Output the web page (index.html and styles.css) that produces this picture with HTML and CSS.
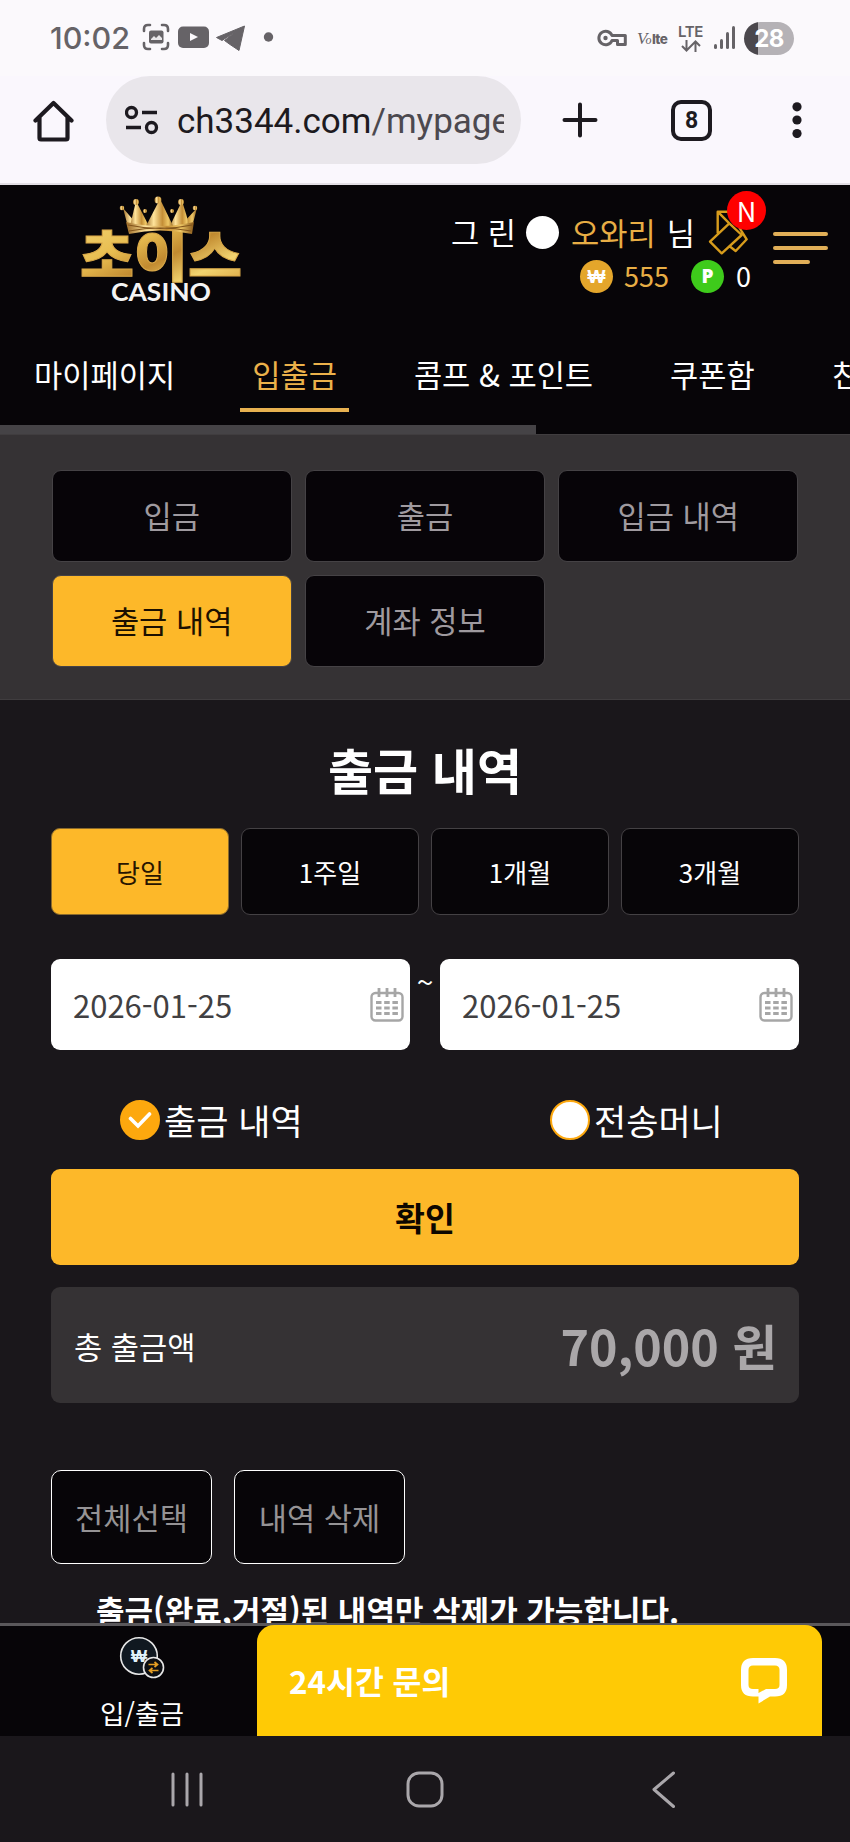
FILE: index.html
```html
<!DOCTYPE html>
<html lang="ko">
<head>
<meta charset="utf-8">
<title>출금 내역</title>
<link rel="stylesheet" href="styles.css">
</head>
<body>
<div class="phone">
  <div class="status">
    <span class="clock">10:02</span>
    <svg class="status-left" width="134" height="30" viewBox="0 0 134 30">
      <g fill="none" stroke="#666367" stroke-width="2.6" stroke-linecap="round">
        <path d="M2 8V6q0-4 4-4h2M20 2h2q4 0 4 4v2M26 20v2q0 4-4 4h-2M8 26H6q-4 0-4-4v-2"/>
      </g>
      <rect x="7" y="7.500" width="14.500" height="13" rx="2" fill="#666367"/>
      <path d="M9 16l3-3 2 2 3-3 3 3v2H9z" fill="#e8e6e9"/>
      <rect x="36" y="3.500" width="31" height="21.500" rx="5" fill="#666367"/>
      <path d="M48 10v8l8-4z" fill="#fbf9fc"/>
      <path d="M74.500 14.500L102.500 3 97 27.500 88 21.500 82.500 17.500 94 8.500 80 17.500z" fill="#666367" stroke="#666367" stroke-width="1" stroke-linejoin="round"/>
      <circle cx="126.500" cy="14" r="4.700" fill="#666367"/>
    </svg>
    <span class="status-space"></span>
    <svg class="key" width="30" height="18" viewBox="0 0 30 18" fill="none" stroke="#666367" stroke-width="3" stroke-linejoin="round"><path d="M15 6.500H28.300V15.500H20.500V11.500H15A6.800 6.800 0 1 1 15 6.500z"/><circle cx="8.500" cy="9" r="2.200" fill="#666367" stroke="none"/></svg>
    <span class="volte"><i>V<small>o</small></i><b>lte</b></span>
    <span class="lte">LTE<svg width="20" height="12" viewBox="0 0 20 12" fill="none" stroke="#666367" stroke-width="2"><path d="M5.500 0v10M1 6l4.500 4.500L10 6M14.500 12V2M10 6l4.500-4.500L19 6"/></svg></span>
    <svg class="signal" width="22" height="24" viewBox="0 0 22 24" fill="#666367"><rect y="18" width="3" height="5" rx="1.500"/><rect x="6" y="13" width="3" height="10" rx="1.500"/><rect x="12" y="6" width="3" height="17" rx="1.500"/><rect x="18" width="3" height="23" rx="1.500"/></svg>
    <span class="battery">28</span>
  </div>

  <div class="toolbar">
    <svg class="home" width="42" height="42" viewBox="0 0 42 42" fill="none" stroke="#1d1a20" stroke-width="4.200" stroke-linecap="round" stroke-linejoin="round"><path d="M2.500 20.500L20.500 3 38.500 20.500M6.500 17V38q0 1.500 1.500 1.500H33q1.500 0 1.500-1.500V17"/></svg>
    <div class="omnibox">
      <svg width="34" height="30" viewBox="0 0 34 30" fill="none" stroke="#1d1a20" stroke-width="3.300"><circle cx="6.500" cy="7.500" r="5"/><path d="M17 7.500H32M1 22.500H16"/><circle cx="26.500" cy="22.500" r="5"/></svg>
      <span class="url">ch3344.com<span class="path">/mypage</span></span>
    </div>
    <svg class="plus" width="36" height="36" viewBox="0 0 36 36" stroke="#1d1a20" stroke-width="4" stroke-linecap="round"><path d="M18 2.500V33.500M2.500 18H33.500"/></svg>
    <span class="tabs-count">8</span>
    <svg class="more" width="10" height="36" viewBox="0 0 10 36" fill="#1d1a20"><circle cx="5" cy="4.800" r="4.600"/><circle cx="5" cy="18" r="4.600"/><circle cx="5" cy="31.500" r="4.600"/></svg>
  </div>

  <header class="header">
    <svg class="logo" width="170" height="112" viewBox="0 0 170 112">
      <defs>
        <linearGradient id="gold" x1="0" y1="0" x2="1" y2="1"><stop offset="0" stop-color="#f2d778"/><stop offset=".35" stop-color="#e8bd50"/><stop offset=".55" stop-color="#c18a30"/><stop offset=".75" stop-color="#f2d470"/><stop offset="1" stop-color="#d39a38"/></linearGradient>
        <linearGradient id="crown" x1="0" y1="0" x2="1" y2="0"><stop offset="0" stop-color="#9c6a25"/><stop offset=".3" stop-color="#ffe49b"/><stop offset=".6" stop-color="#c48e36"/><stop offset=".8" stop-color="#efc866"/><stop offset="1" stop-color="#875719"/></linearGradient>
      </defs>
      <text class="logo-ko" x="4" y="80" textLength="162" lengthAdjust="spacingAndGlyphs">초이스</text>
      <g fill="url(#crown)">
        <path d="M52 31L47 12 59 26 60 15 71 30z"/>
        <path d="M116 31L121 12 108 26 107 15 97 30z"/>
        <path d="M53 34L60 5 74 32z"/><path d="M115 34L106 5 93 32z"/>
        <path d="M69 32L84 3 98 32z"/>
        <path d="M50 26q34 8 68 0l-2 12q-32-7-63 0z"/>
        <circle cx="46" cy="12" r="2.300"/><circle cx="60" cy="6" r="3"/><circle cx="82" cy="4" r="3.500"/><circle cx="105" cy="6" r="3"/><circle cx="119" cy="12" r="2.300"/><circle cx="69" cy="15" r="2"/><circle cx="96" cy="15" r="2"/>
      </g>
      <path d="M52 29q32 7 64 0M53 35q31-6 62 0" fill="none" stroke="#82551c" stroke-width="1.200"/>
      <text class="logo-en" x="35" y="104.500" textLength="100" lengthAdjust="spacingAndGlyphs">CASINO</text>
    </svg>
    <div class="account">
      <div class="user">
        <span>그 린</span><i class="ball"></i><span class="name">오와리</span><span>님</span>
        <span class="note">
          <svg width="42" height="46" viewBox="0 0 42 46" fill="none" stroke="#d79c1c" stroke-width="2.400" stroke-linejoin="round"><path d="M2 32.700L21.300 14.300 33.700 26 13.700 44.300zM9.700 24.300V2.700H22M9.700 2.700L21.300 14.300M22 2.700L34 23 38.700 30.300 27.700 42 21.300 37"/></svg>
          <b class="badge">N</b>
        </span>
      </div>
      <div class="wallet">
        <i class="coin won">₩</i><span class="won-value">555</span><i class="coin point">P</i><span>0</span>
      </div>
    </div>
    <div class="menu"><i></i><i></i><i class="short"></i></div>
  </header>

  <nav class="tabs">
    <span>마이페이지</span><span class="active">입출금</span><span>콤프 &amp; 포인트</span><span>쿠폰함</span><span>친구</span>
  </nav>
  <div class="scroll-track"><div class="scroll-thumb"></div></div>

  <section class="submenu">
    <span>입금</span><span>출금</span><span>입금 내역</span><span class="active">출금 내역</span><span>계좌 정보</span>
  </section>

  <main class="content">
    <h1>출금 내역</h1>
    <div class="periods"><span class="active">당일</span><span>1주일</span><span>1개월</span><span>3개월</span></div>
    <div class="dates">
      <div class="date">2026-01-25<svg width="34" height="34" viewBox="0 0 34 34" fill="none" stroke="#a6a6a6" stroke-width="2.400"><rect x="1.500" y="5" width="31" height="27.500" rx="4"/><g stroke-width="2.800"><path d="M9 0V9M17 0V9M25 0V9"/><path d="M6 14.500H28M6 20H28M6 25.500H28" stroke-dasharray="5.500 2.700"/></g></svg></div>
      <span class="tilde">~</span>
      <div class="date">2026-01-25<svg width="34" height="34" viewBox="0 0 34 34" fill="none" stroke="#a6a6a6" stroke-width="2.400"><rect x="1.500" y="5" width="31" height="27.500" rx="4"/><g stroke-width="2.800"><path d="M9 0V9M17 0V9M25 0V9"/><path d="M6 14.500H28M6 20H28M6 25.500H28" stroke-dasharray="5.500 2.700"/></g></svg></div>
    </div>
    <div class="radios">
      <label class="radio"><i class="dot checked"><svg width="24" height="18" viewBox="0 0 24 18" fill="none" stroke="#fff" stroke-width="3.600" stroke-linecap="round"><path d="M2.500 7.500L10 15 21.500 3"/></svg></i>출금 내역</label>
      <label class="radio"><i class="dot"></i>전송머니</label>
    </div>
    <div class="confirm">확인</div>
    <div class="total"><span>총 출금액</span><strong>70,000 원</strong></div>
    <div class="actions"><span>전체선택</span><span class="wide">내역 삭제</span></div>
    <p class="notice">출금(완료,거절)된 내역만 삭제가 가능합니다.</p>
  </main>

  <footer class="dock">
    <div class="dock-item">
      <svg width="46" height="44" viewBox="0 0 46 44"><circle cx="20" cy="20" r="18.300" fill="#101820" stroke="#e6e6e6" stroke-width="1.600"/><text class="won-glyph" x="20" y="26" text-anchor="middle">₩</text><circle cx="34.500" cy="31.500" r="10" fill="#0c0e12" stroke="#e6e6e6" stroke-width="1.600"/><path d="M29.500 28.500H38M35.500 26l3 2.500-3 2.500M39.500 34.500H31M33.500 32l-3 2.500 3 2.500" fill="none" stroke="#e39d22" stroke-width="1.700"/></svg>
      <span>입/출금</span>
    </div>
    <div class="chat"><span>24시간 문의</span>
      <svg width="48" height="48" viewBox="0 0 48 48"><path fill="#fff" fill-rule="evenodd" d="M13 1H35Q47 1 47 13V28Q47 39.500 35 39.500H30L18.500 46.500V39.500H13Q1 39.500 1 28V13Q1 1 13 1zM13 8.500Q8.500 8.500 8.500 13V28Q8.500 32 13 32H18.500V36L26 32H35Q39.500 32 39.500 28V13Q39.500 8.500 35 8.500z"/></svg>
    </div>
  </footer>
  <div class="android">
    <svg width="34" height="36" viewBox="0 0 34 36" stroke="#aaa7ab" stroke-width="3" stroke-linecap="round"><path d="M3 2V33M17 2V33M31 2V33"/></svg>
    <svg width="38" height="38" viewBox="0 0 38 38" fill="none" stroke="#aaa7ab" stroke-width="3"><rect x="2" y="2" width="34" height="33" rx="11"/></svg>
    <svg width="24" height="38" viewBox="0 0 24 38" fill="none" stroke="#aaa7ab" stroke-width="3" stroke-linecap="round" stroke-linejoin="round"><path d="M21.500 2L2 18.500 21.500 35.500"/></svg>
  </div>
</div>
</body>
</html>
```

FILE: styles.css
```css
* { box-sizing: border-box; }
body { margin: 0; background: #1a171b; }
svg { display: block; flex: none; }
.phone {
  width: 850px; height: 1842px; overflow: hidden;
  display: flex; flex-direction: column;
  font-family: "Noto Sans CJK KR", "Noto Sans", sans-serif;
  font-size: 30.7px; color: #fff; white-space: nowrap;
}
.phone > * { flex: none; }
i { font-style: normal; }

.status { height: 76px; background: #fbf9fc; display: flex; align-items: center; padding: 0 56px 0 50px; color: #666367; font-family: Inter, sans-serif; }
.clock { font: 500 30.500px/30px Inter, sans-serif; width: 92px; }
.status-space { flex: 1; }
.key { margin-right: 10px; }
.volte { display: flex; align-items: baseline; width: 33px; margin-right: 7px; margin-top: 2px; }
.volte i { font: italic 17px/20px "Liberation Serif", serif; letter-spacing: -2px; width: 15px; }
.volte small { font-size: 12px; }
.volte b { font: 800 13.500px/20px Inter, sans-serif; letter-spacing: -0.7px; }
.lte { display: flex; flex-direction: column; align-items: center; width: 27px; font: 600 15px/14px Inter, sans-serif; margin-right: 10px; gap: 1px; letter-spacing: -0.3px; }
.signal { margin-right: 8px; }
.battery { width: 50px; height: 33px; border-radius: 17px; background: linear-gradient(90deg, #4b484d 14px, #b5b2b6 14px); color: #fff; font: 700 24px/33px Inter, sans-serif; text-align: center; letter-spacing: -0.5px; }

.toolbar { height: 109px; background: #faf7fd; border-bottom: 2px solid #e3dfe5; display: flex; padding: 0 48px 0 33px; }
.home { margin-top: 24px; margin-right: 31px; }
.omnibox { width: 416px; height: 88px; border-radius: 44px; background: #e9e6eb; display: flex; align-items: center; padding: 0 17px 0 19px; }
.url { margin: 4px 0 0 18px; width: 327px; overflow: hidden; font: 35px/50px Roboto, sans-serif; color: #1d1a20; }
.path { color: #4c494f; }
.plus { margin: 26px 0 0 41px; }
.tabs-count { width: 41px; height: 41px; margin: 24px 0 0 73px; border: 4px solid #1d1a20; border-radius: 10px; font: 700 23px/34px Roboto, sans-serif; color: #1d1a20; text-align: center; }
.more { margin: 26px 0 0 80px; }

.header { height: 145px; background: #070508; display: flex; padding-left: 76px; }
.logo { margin-top: 11px; }
.logo-ko { font: 900 55px "Noto Sans CJK KR", sans-serif; fill: url(#gold); stroke: #d9a848; stroke-width: 1; }
.logo-en { font: 700 25px Lato, sans-serif; fill: #f4f4f4; }
.account { width: 509px; margin-top: 22px; display: flex; flex-direction: column; align-items: flex-end; }
.user { display: flex; align-items: center; height: 50px; line-height: 50px; }
.ball { width: 33px; height: 33px; border-radius: 50%; background: #fff; margin: 0 12px 0 10px; }
.name { color: #e8ae45; margin-right: 11px; }
.note { position: relative; width: 42px; height: 46px; margin: 0 5px 0 13px; }
.badge { position: absolute; left: 19px; top: -18px; width: 39px; height: 39px; border-radius: 50%; background: #f00; font-weight: 400; font-size: 27px; line-height: 39px; text-align: center; }
.wallet { display: flex; align-items: center; height: 34px; margin-top: 2px; font-size: 27px; line-height: 34px; padding-right: 4px; }
.coin { width: 33px; height: 33px; border-radius: 50%; font: 800 19px/32px "Open Sans", sans-serif; text-align: center; }
.won { background: #e4a62b; }
.point { background: #3ecb1b; margin: 0 12px 0 22px; }
.won-value { color: #e8ae45; margin-left: 11px; }
.menu { margin: 47px 0 0 18px; display: flex; flex-direction: column; gap: 10px; }
.menu i { width: 55px; height: 4px; border-radius: 2px; background: #e1af58; }
.menu .short { width: 37px; }

.tabs { height: 95px; background: #070508; display: flex; padding: 20px 0 0 22px; line-height: 47px; }
.tabs span { flex: none; height: 62px; padding: 0 12px; margin-right: 53px; }
.tabs .active { color: #ebb14a; border-bottom: 4px solid #e7b150; }
.scroll-track { height: 9px; background: #070508; }
.scroll-thumb { height: 9px; width: 536px; background: #454346; }

.submenu { height: 266px; background: #353234; border-top: 1px solid #403d3f; border-bottom: 1px solid #403d3f; padding: 34.500px 51.500px; display: grid; grid-template-columns: repeat(3, 1fr); grid-auto-rows: 92px; gap: 13px; }
.submenu span { border: 1px solid #454245; border-radius: 9px; background: #070408; color: #9f9a9f; text-align: center; line-height: 87px; }
.submenu .active { background: #fdb829; color: #1c1000; }

.content { height: 923px; overflow: hidden; background: #1a171b; padding: 0 51px; }
h1 { margin: 0; padding-top: 37px; font-size: 49px; line-height: 64px; height: 128px; text-align: center; font-weight: 700; }
.periods { display: grid; grid-template-columns: repeat(4, 1fr); gap: 12px; }
.periods span { height: 87px; border: 1px solid #444144; border-radius: 9px; background: #070508; text-align: center; font-size: 26px; line-height: 85px; }
.periods .active { background: #fdb829; color: #281500; border-color: #8a6a2c; }
.dates { display: flex; margin-top: 44px; }
.date { width: 359px; height: 91px; border-radius: 9px; background: #fff; color: #414042; font-size: 31px; display: flex; align-items: center; justify-content: space-between; padding: 0 6px 0 22px; }
.tilde { width: 30px; text-align: center; font-size: 30px; line-height: 44px; }
.radios { display: flex; margin-top: 46px; height: 50px; }
.radio { flex: none; width: 430px; display: flex; align-items: center; padding-left: 69px; font-size: 35px; line-height: 50px; height: 48px; gap: 4px; }
.dot { width: 40px; height: 40px; border-radius: 50%; background: #fff; border: 2px solid #fda80e; display: flex; align-items: center; justify-content: center; }
.dot.checked { background: #fda80e; }
.confirm { margin-top: 23px; height: 96px; border-radius: 9px; background: #fdb829; color: #0d0700; font-weight: 700; font-size: 32.500px; line-height: 95px; text-align: center; }
.total { margin-top: 22px; height: 116px; border-radius: 9px; background: #353234; display: flex; align-items: center; justify-content: space-between; padding: 0 22px 0 23px; }
.total strong { font-size: 48.400px; color: #aaa7a9; }
.actions { display: flex; gap: 22px; margin-top: 67px; }
.actions span { width: 161px; height: 94px; border: 1.500px solid #fff; border-radius: 10px; background: #070508; color: #959395; text-align: center; line-height: 92px; }
.actions .wide { width: 171px; }
.notice { margin: 24px 0 0 45px; font-weight: 700; font-size: 31px; line-height: 44px; }

.dock { height: 113px; background: #070508; border-top: 3px solid #5a585b; display: flex; }
.dock-item { width: 257px; padding: 10px 0 0 27px; display: flex; flex-direction: column; align-items: center; font-size: 26.600px; line-height: 40px; gap: 13px; }
.won-glyph { font: 800 17px "Open Sans", sans-serif; fill: #e2f2fa; }
.chat { width: 565px; height: 111px; margin-top: -1px; border-radius: 17px 17px 0 0; background: #ffca05; display: flex; align-items: center; justify-content: space-between; padding: 0 34px 0 32px; font-weight: 700; font-size: 31.400px; }
.android { height: 106px; background: #1a171b; display: flex; align-items: center; padding: 2px 0 0 170px; }
.android svg:nth-child(1) { margin-right: 202px; }
.android svg:nth-child(2) { margin-right: 208px; }
```
